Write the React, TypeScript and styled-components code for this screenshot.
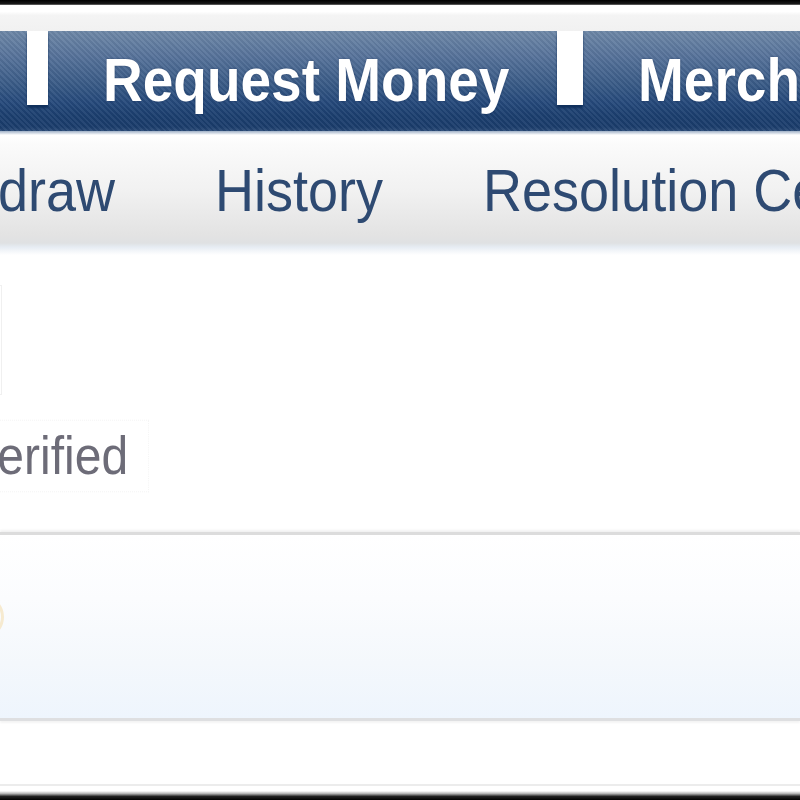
import styled, { createGlobalStyle } from 'styled-components';

const GlobalStyle = createGlobalStyle`
  html, body {
    margin: 0;
    padding: 0;
    background: #ffffff;
    overflow: hidden;
  }
  body {
    font-family: 'Liberation Sans', Arial, sans-serif;
  }
`;

const Frame = styled.div`
  width: 800px;
  height: 800px;
  display: flex;
  flex-direction: column;
  overflow: hidden;
  background: #ffffff;
`;

const TopEdge = styled.div`
  height: 5px;
  flex: none;
  background: linear-gradient(#000000, #1a1a1a 80%, #8a8a8a);
`;

const Masthead = styled.div`
  height: 26px;
  flex: none;
  background: linear-gradient(#ffffff 0%, #ffffff 25%, #f4f4f4 40%, #f1f1f1 100%);
`;

const TabBar = styled.div`
  height: 100px;
  flex: none;
  display: flex;
  align-items: flex-start;
  background:
    repeating-linear-gradient(
      45deg,
      rgba(255, 255, 255, 0.06) 0px,
      rgba(255, 255, 255, 0.06) 2px,
      rgba(0, 0, 0, 0.04) 2px,
      rgba(0, 0, 0, 0.04) 4px
    ),
    linear-gradient(#6d87a6 0%, #56729a 25%, #3c5d88 50%, #24487a 72%, #1b3e6e 85%, #1a3c6b 96%, #2a4b78 100%);
`;

const Tab = styled.div<{ $width?: number }>`
  flex: ${(p) => (p.$width ? 'none' : '1')};
  min-width: 0;
  width: ${(p) => (p.$width ? `${p.$width}px` : 'auto')};
  padding-left: ${(p) => (p.$width && p.$width < 60 ? 0 : 55)}px;
  box-sizing: border-box;
  white-space: nowrap;
`;

const TabLabel = styled.span`
  display: inline-block;
  margin-top: 22px;
  font-size: 55px;
  line-height: 55px;
  font-weight: bold;
  color: #ffffff;
  transform: scaleY(1.1);
  text-shadow: 0 0 2px rgba(10, 30, 70, 0.5);
  filter: blur(0.5px);
`;

const TabGap = styled.div<{ $width: number }>`
  flex: none;
  width: ${(p) => p.$width}px;
  height: 74px;
  background: #ffffff;
  box-shadow: 0 3px 2px #10305c;
`;

const SubNav = styled.div`
  height: 124px;
  flex: none;
  display: flex;
  align-items: flex-start;
  background: linear-gradient(
    #9fb0c6 0px,
    #ffffff 4px,
    #fbfbfb 12px,
    #f1f1f1 60px,
    #e3e3e3 104px,
    #dfe1e3 112px,
    #e6ecf3 116px,
    #f6f8fb 121px,
    #ffffff 124px
  );
`;

const SubNavList = styled.div`
  display: flex;
  margin-left: -160px;
  white-space: nowrap;
`;

const SubNavItem = styled.span`
  display: inline-block;
  padding: 0 50px;
  margin-top: 32px;
  font-size: 54px;
  line-height: 54px;
  color: #2e4a72;
  transform: scaleY(1.1);
  filter: blur(0.5px);
`;

const Content = styled.div`
  height: 277px;
  flex: none;
  display: flex;
  flex-direction: column;
  padding-top: 30px;
  box-sizing: border-box;
`;

const PhotoFrame = styled.div`
  width: 120px;
  height: 110px;
  margin-left: -118px;
  border: 1px solid #f0f0f0;
  box-sizing: border-box;
`;

const StatusLabel = styled.span`
  display: inline-block;
  align-self: flex-start;
  margin-top: 37px;
  margin-left: -32px;
  padding-right: 12px;
  font-size: 48px;
  line-height: 48px;
  color: #6d6c78;
  outline: 1px dotted #f5f5f5;
  outline-offset: 8px;
  transform: scaleY(1.1);
  filter: blur(0.5px);
`;

const InfoBand = styled.div`
  height: 189px;
  flex: none;
  display: flex;
  align-items: center;
  border-top: 3px solid #dcdcdc;
  border-bottom: 3px solid #dedfe1;
  box-sizing: border-box;
  background: linear-gradient(#ffffff 0%, #fbfcfe 35%, #f4f8fc 70%, #eef5fd 100%);
  box-shadow: 0 -2px 2px #f2f2f2, 0 2px 2px #f4f4f4;
`;

const BadgeRing = styled.div`
  width: 44px;
  height: 44px;
  margin-left: -40px;
  margin-top: -20px;
  border-radius: 50%;
  border: 3px solid #f6ead0;
  box-sizing: border-box;
`;

const Footer = styled.div`
  flex: 1;
  display: flex;
  flex-direction: column;
  justify-content: flex-end;
`;

const FooterRule = styled.div`
  height: 2px;
  margin-bottom: 5px;
  background: #ececec;
`;

const BottomEdge = styled.div`
  height: 9px;
  background: linear-gradient(#ffffff 0%, #b0b0b0 30%, #222222 60%, #000000 100%);
`;

const tabs = [
  { label: 'Send Money', width: 27 },
  { label: 'Request Money', width: 509 },
  { label: 'Merchant Services' },
];

const subNav = ['Withdraw', 'History', 'Resolution Center', 'Profile'];

const App = () => {
  return (
    <>
      <GlobalStyle />
      <Frame>
        <TopEdge />
        <Masthead />
        <TabBar>
          <Tab $width={tabs[0].width} />
          <TabGap $width={21} />
          <Tab $width={tabs[1].width}>
            <TabLabel>{tabs[1].label}</TabLabel>
          </Tab>
          <TabGap $width={26} />
          <Tab>
            <TabLabel>{tabs[2].label}</TabLabel>
          </Tab>
        </TabBar>
        <SubNav>
          <SubNavList>
            {subNav.map((item) => (
              <SubNavItem key={item}>{item}</SubNavItem>
            ))}
          </SubNavList>
        </SubNav>
        <Content>
          <PhotoFrame />
          <StatusLabel>Verified</StatusLabel>
        </Content>
        <InfoBand>
          <BadgeRing />
        </InfoBand>
        <Footer>
          <FooterRule />
          <BottomEdge />
        </Footer>
      </Frame>
    </>
  );
};

export default App;
